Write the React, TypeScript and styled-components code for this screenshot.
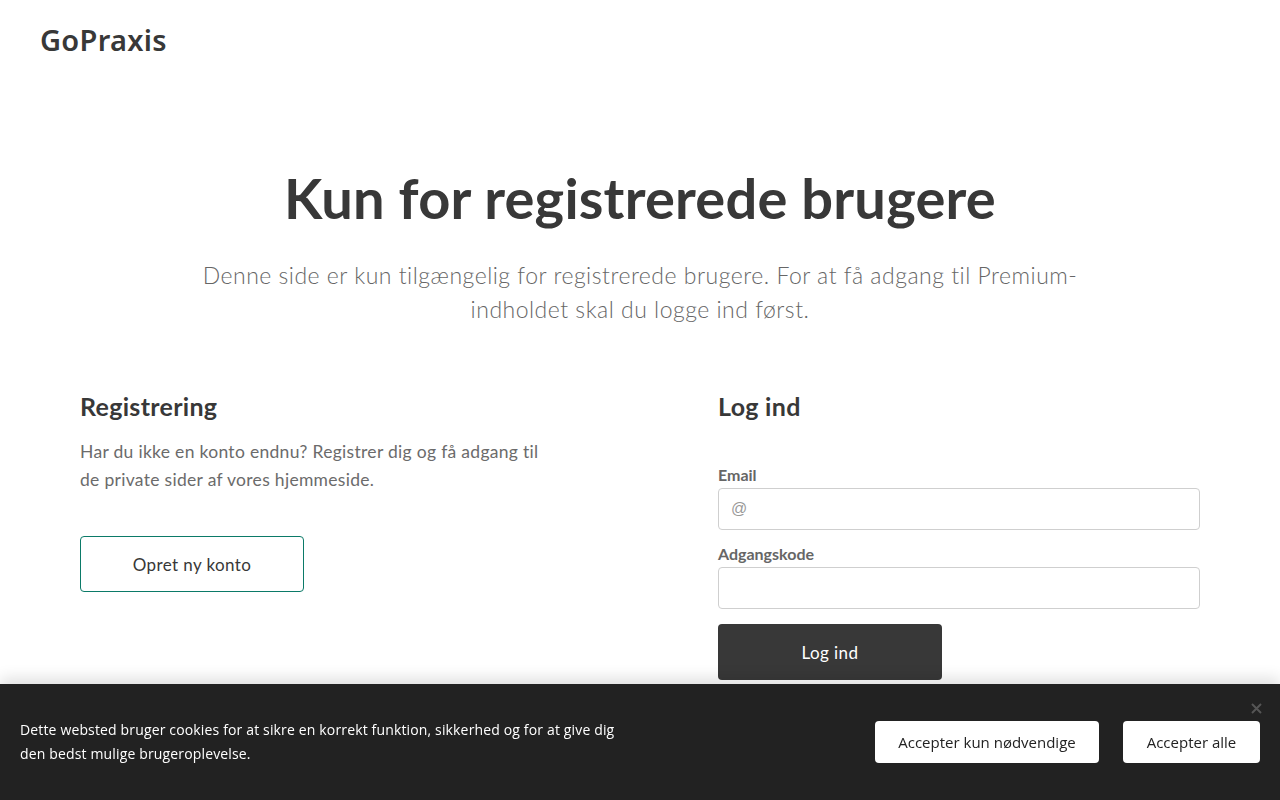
import React from "react";
import styled, { createGlobalStyle } from "styled-components";

const Global = createGlobalStyle`
  html, body { margin: 0; padding: 0; background: #fff; }
  body { font-family: "Lato", "Noto Sans", sans-serif; color: #383838; }
  * { box-sizing: border-box; }
`;

const Page = styled.div`
  min-height: 800px;
  display: flex;
  flex-direction: column;
`;

const Header = styled.header`
  height: 78px;
  padding: 0 40px;
  display: flex;
  align-items: center;
`;

const Logo = styled.div`
  font-family: "Noto Sans", "Lato", sans-serif;
  font-weight: 600;
  font-size: 29px;
  color: #383838;
  letter-spacing: 0.3px;
`;

const Hero = styled.section`
  margin-top: 87px;
  display: flex;
  flex-direction: column;
  align-items: center;
  text-align: center;
`;

const Title = styled.h1`
  margin: 0;
  font-family: "Lato", sans-serif;
  font-weight: 700;
  font-size: 56px;
  line-height: 66px;
  letter-spacing: 0.2px;
  color: #383838;
`;

const Lead = styled.p`
  margin: 27px 0 0;
  max-width: 900px;
  font-family: "Lato", sans-serif;
  font-weight: 300;
  font-size: 23px;
  line-height: 34px;
  letter-spacing: 0.5px;
  color: #666;
`;

const Columns = styled.section`
  margin: 65px auto 0;
  width: 1120px;
  display: grid;
  grid-template-columns: 482px 482px;
  justify-content: space-between;
`;

const Column = styled.div`
  display: flex;
  flex-direction: column;
  align-items: flex-start;
`;

const ColTitle = styled.h2`
  margin: 0;
  font-family: "Lato", sans-serif;
  font-weight: 700;
  font-size: 25px;
  line-height: 31px;
  letter-spacing: 0.3px;
  color: #383838;
`;

const Text = styled.p`
  margin: 16px 0 0;
  width: 470px;
  font-family: "Lato", sans-serif;
  font-size: 17.5px;
  line-height: 28px;
  letter-spacing: 0.3px;
  color: #6b6b6b;
`;

const OutlineButton = styled.button`
  margin-top: 42px;
  width: 224px;
  height: 56px;
  background: #fff;
  border: 1px solid #0b7a68;
  border-radius: 4px;
  font-family: "Lato", sans-serif;
  font-size: 17px;
  letter-spacing: 0.4px;
  color: #383838;
  cursor: pointer;
`;

const Form = styled.form`
  margin-top: 43px;
  width: 100%;
  display: flex;
  flex-direction: column;
`;

const Label = styled.label<{ $first?: boolean }>`
  margin-top: ${(p) => (p.$first ? "0" : "14px")};
  font-family: "Lato", sans-serif;
  font-weight: 700;
  font-size: 16px;
  line-height: 20px;
  color: #666;
`;

const Input = styled.input`
  margin-top: 3px;
  width: 100%;
  height: 42px;
  border: 1px solid #cfcfcf;
  border-radius: 4px;
  padding: 0 12px;
  font-family: "Liberation Sans", sans-serif;
  font-size: 16px;
  color: #333;
  outline: none;
  &::placeholder { color: #999; }
`;

const SolidButton = styled.button`
  margin-top: 15px;
  width: 224px;
  height: 56px;
  border: none;
  border-radius: 4px;
  background: #383838;
  color: #fff;
  font-family: "Lato", sans-serif;
  font-size: 17px;
  letter-spacing: 0.4px;
  cursor: pointer;
`;

const Cookie = styled.div`
  position: fixed;
  left: 0;
  right: 0;
  bottom: 0;
  height: 116px;
  background: #222;
  box-shadow: 0 -6px 14px rgba(0, 0, 0, 0.12);
  padding: 0 20px;
  display: flex;
  align-items: center;
  justify-content: space-between;
  font-family: "Open Sans", sans-serif;
`;

const CookieText = styled.p`
  margin: 0;
  width: 622px;
  font-size: 14px;
  line-height: 24px;
  letter-spacing: 0.15px;
  color: #fff;
`;

const CookieActions = styled.div`
  display: flex;
  gap: 24px;
`;

const CookieButton = styled.button<{ $w: number }>`
  width: ${(p) => p.$w}px;
  height: 42px;
  border: none;
  border-radius: 4px;
  background: #fff;
  color: #222;
  font-family: "Open Sans", sans-serif;
  font-size: 15px;
  cursor: pointer;
`;

const Close = styled.button`
  position: absolute;
  top: 17px;
  right: 17px;
  width: 14px;
  height: 14px;
  padding: 0;
  border: none;
  background: transparent;
  display: flex;
  align-items: center;
  justify-content: center;
  cursor: pointer;
`;

export default function App() {
  return (
    <Page>
      <Global />
      <Header>
        <Logo>GoPraxis</Logo>
      </Header>
      <Hero>
        <Title>Kun for registrerede brugere</Title>
        <Lead>
          Denne side er kun tilgængelig for registrerede brugere. For at få adgang til Premium-indholdet skal du logge ind først.
        </Lead>
      </Hero>
      <Columns>
        <Column>
          <ColTitle>Registrering</ColTitle>
          <Text>
            Har du ikke en konto endnu? Registrer dig og få adgang til de private sider af vores hjemmeside.
          </Text>
          <OutlineButton type="button">Opret ny konto</OutlineButton>
        </Column>
        <Column>
          <ColTitle>Log ind</ColTitle>
          <Form onSubmit={(e) => e.preventDefault()}>
            <Label $first>Email</Label>
            <Input type="email" placeholder="@" />
            <Label>Adgangskode</Label>
            <Input type="password" />
            <SolidButton type="submit">Log ind</SolidButton>
          </Form>
        </Column>
      </Columns>
      <Cookie>
        <CookieText>
          Dette websted bruger cookies for at sikre en korrekt funktion, sikkerhed og for at give dig den bedst mulige brugeroplevelse.
        </CookieText>
        <CookieActions>
          <CookieButton $w={224}>Accepter kun nødvendige</CookieButton>
          <CookieButton $w={137}>Accepter alle</CookieButton>
        </CookieActions>
        <Close aria-label="Luk">
          <svg width="11" height="11" viewBox="0 0 11 11">
            <path d="M1 1 L10 10 M10 1 L1 10" stroke="#555" strokeWidth="2" />
          </svg>
        </Close>
      </Cookie>
    </Page>
  );
}
